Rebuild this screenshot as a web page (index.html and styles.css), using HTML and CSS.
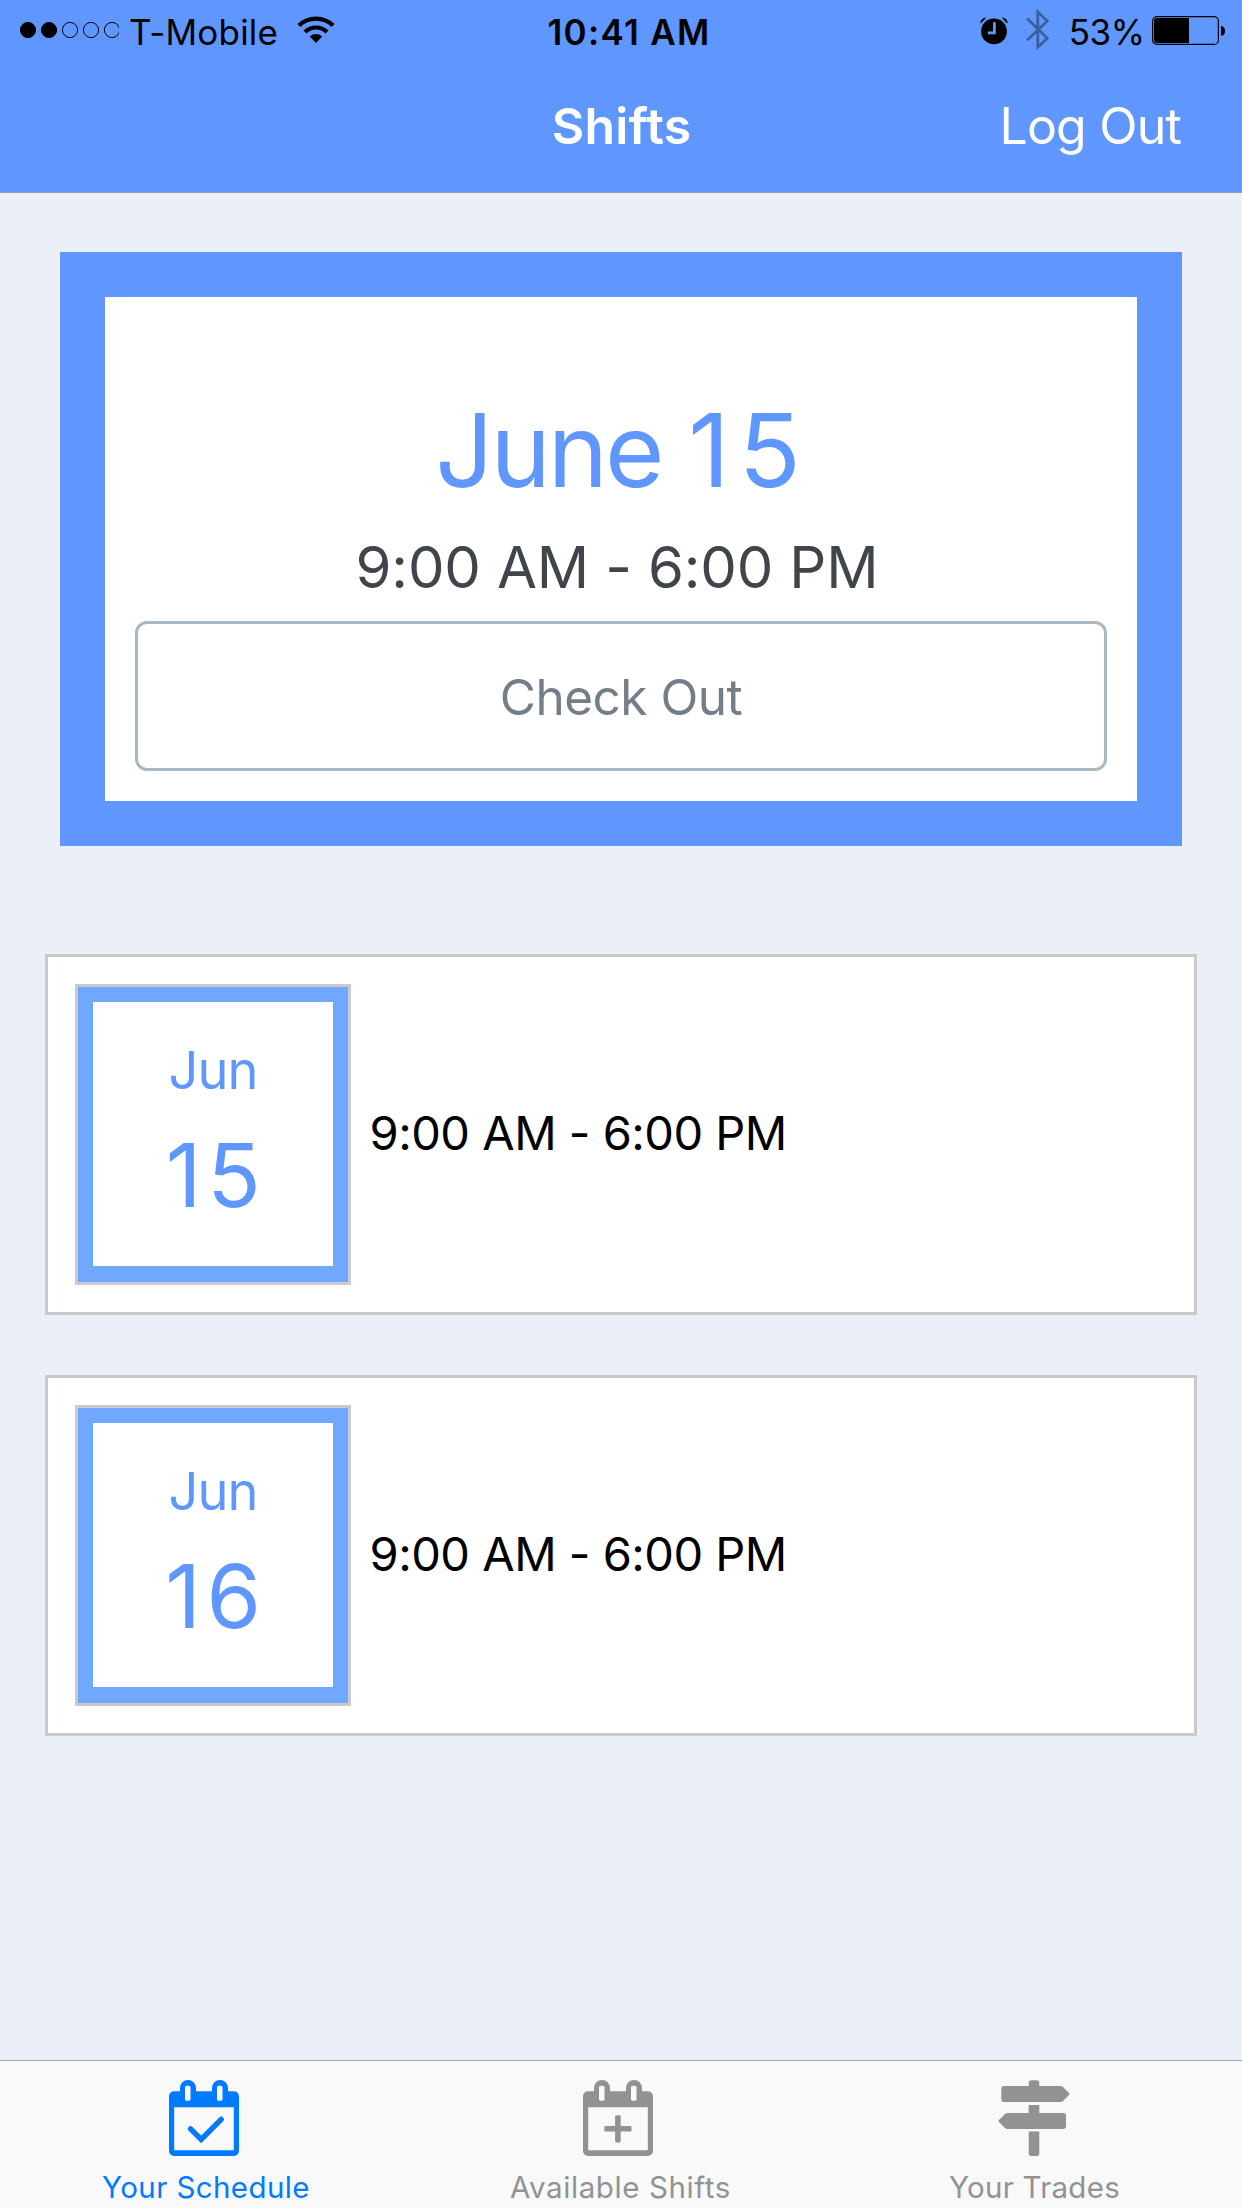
FILE: index.html
```html
<!DOCTYPE html>
<html lang="en">
<head>
<meta charset="utf-8">
<title>Shifts</title>
<link rel="stylesheet" href="styles.css">
</head>
<body>
<div class="app">
  <header class="top">
    <div class="status">
      <div class="status-left">
        <svg class="signal" width="100" height="18" viewBox="0 0 100 18"><g stroke="#000"><circle cx="9" cy="9" r="7.6"/><circle cx="30" cy="9" r="7.6"/><g fill="none"><circle cx="51" cy="9" r="7.6"/><circle cx="72" cy="9" r="7.6"/><circle cx="93" cy="9" r="7.6"/></g></g></svg>
        <span class="carrier">T-Mobile</span>
        <svg class="wifi" width="38" height="28" viewBox="0 0 38 28"><path d="M19 27L12.8 20.6A9 9 0 0 1 25.2 20.6Z"/><g fill="none" stroke="#000" stroke-width="4.2"><path d="M8 15.9A15.9 15.9 0 0 1 30 15.9"/><path d="M1.9 9.6A24.6 24.6 0 0 1 36.1 9.6"/></g></svg>
      </div>
      <span class="clock">10:41 AM</span>
      <div class="status-right">
        <svg class="alarm" width="28" height="28" viewBox="0 0 28 28"><circle cx="14" cy="14.4" r="12.9"/><path d="M0.3 6Q1 0.8 6.4 0.6L1 6.2ZM27.7 6Q27 0.8 21.6 0.6L27 6.2Z"/><path d="M14.4 5.2V15.8H7.8" fill="none" stroke="#5f97ff" stroke-width="2.8"/></svg>
        <svg class="bluetooth" width="24" height="42" viewBox="0 0 24 42"><path d="M1.2 9.6L21.3 29.2 11.8 38.2V3L21.3 12 1.2 31.2" fill="none" stroke="#3b5f9f" stroke-width="2.8"/></svg>
        <span class="percent">53%</span>
        <svg class="battery" width="74" height="30" viewBox="0 0 74 30"><rect x=".6" y=".6" width="65.8" height="27.8" rx="4.5" fill="none" stroke="#000" stroke-width="1.2"/><path d="M5 2H37V27H5Q2 27 2 24V5Q2 2 5 2ZM69 10Q73 10.4 73 14.9T69 19.8Z"/></svg>
      </div>
    </div>
    <nav class="nav">
      <h1 class="title">Shifts</h1>
      <a class="logout">Log Out</a>
    </nav>
  </header>

  <main class="content">
    <section class="current">
      <h2 class="current-date"><span class="word">June</span> <span class="number">15</span></h2>
      <p class="current-time">9:00 AM - 6:00 PM</p>
      <button class="checkout">Check Out</button>
    </section>
    <ul class="shifts">
      <li class="shift">
        <div class="date"><span class="month">Jun</span><span class="day">15</span></div>
        <span class="hours">9:00 AM - 6:00 PM</span>
      </li>
      <li class="shift">
        <div class="date"><span class="month">Jun</span><span class="day">16</span></div>
        <span class="hours">9:00 AM - 6:00 PM</span>
      </li>
    </ul>
  </main>

  <footer class="tabs">
    <a class="tab active">
      <svg width="70" height="76" viewBox="0 0 70 76" fill="currentColor"><path fill-rule="evenodd" d="M5 11.3H11V8A8 8 0 0 1 27 8V11.3H43V8A8 8 0 0 1 59 8V11.3H65A5 5 0 0 1 70 16.3V71A5 5 0 0 1 65 76H5A5 5 0 0 1 0 71V16.3A5 5 0 0 1 5 11.3ZM5.2 27.2V70.2H64.8V27.2ZM17.5 5.8Q16 5.8 16 7.3V19.3Q16 20.8 17.5 20.8H20Q21.5 20.8 21.5 19.3V7.3Q21.5 5.8 20 5.8ZM49.5 5.8Q48 5.8 48 7.3V19.3Q48 20.8 49.5 20.8H52Q53.5 20.8 53.5 19.3V7.3Q53.5 5.8 52 5.8Z"/><path d="M21.6 48.8L32.2 59.4 52.2 39.4" fill="none" stroke="currentColor" stroke-width="5.4" stroke-linecap="round"/></svg>
      <span class="label schedule">Your Schedule</span>
    </a>
    <a class="tab">
      <svg width="70" height="76" viewBox="0 0 70 76" fill="currentColor"><path fill-rule="evenodd" d="M5 11.3H11V8A8 8 0 0 1 27 8V11.3H43V8A8 8 0 0 1 59 8V11.3H65A5 5 0 0 1 70 16.3V71A5 5 0 0 1 65 76H5A5 5 0 0 1 0 71V16.3A5 5 0 0 1 5 11.3ZM5.2 27.2V70.2H64.8V27.2ZM17.5 5.8Q16 5.8 16 7.3V19.3Q16 20.8 17.5 20.8H20Q21.5 20.8 21.5 19.3V7.3Q21.5 5.8 20 5.8ZM49.5 5.8Q48 5.8 48 7.3V19.3Q48 20.8 49.5 20.8H52Q53.5 20.8 53.5 19.3V7.3Q53.5 5.8 52 5.8Z"/><rect x="21.3" y="46" width="27.2" height="5.6" rx="1.4"/><rect x="32.1" y="35.2" width="5.6" height="27.2" rx="1.4"/></svg>
      <span class="label available">Available Shifts</span>
    </a>
    <a class="tab">
      <svg width="72" height="76" viewBox="0 0 72 76" fill="currentColor"><path d="M30.7 6V3Q30.7 .3 33.4 .3H38.6Q41.3 .3 41.3 3V6H62.5Q64 6 65 7L71 13Q72 14 71 15L65 21Q64 22 62.5 22H6Q3.3 22 3.3 19.3V8.7Q3.3 6 6 6ZM30.7 25H41.3V33H65.3Q68 33 68 35.7V46.3Q68 49 65.3 49H9.5Q8 49 7 48L1 42Q0 41 1 40L7 34Q8 33 9.5 33H30.7ZM30.7 51.5H41.3V73.3Q41.3 76 38.6 76H33.4Q30.7 76 30.7 73.3Z"/></svg>
      <span class="label trades">Your Trades</span>
    </a>
  </footer>
</div>
</body>
</html>
```
FILE: styles.css
```css
* { box-sizing: border-box; }

body {
  margin: 0;
  font-family: Inter, "Liberation Sans", sans-serif;
  background: #ebeff8;
  color: #000;
}

h1, h2, p, ul { margin: 0; padding: 0; font-weight: 400; }

svg { display: block; flex: none; }

.app {
  display: flex;
  flex-direction: column;
  width: 1242px;
  height: 2208px;
  overflow: hidden;
}

.top {
  flex: none;
  height: 193px;
  background: #5f97ff;
  border-bottom: 1px solid #9aa0ad;
}

.status, .nav {
  display: grid;
  grid-template-columns: 1fr auto 1fr;
  align-items: center;
}

.status { height: 60px; font-size: 35px; line-height: 56px; padding: 0 16px 0 19px; }
.status-left, .status-right { display: flex; align-items: center; height: 60px; }
.status-right { justify-content: flex-end; }
.carrier { margin-left: 10px; padding-top: 3px; letter-spacing: 0.2px; }
.wifi { margin-left: 19px; }
.clock { padding: 3px 0 0 13px; font-weight: 600; letter-spacing: 1.3px; }
.alarm { margin-top: 1px; }
.bluetooth { margin-left: 18px; }
.percent { margin: 0 7.5px 0 19px; padding-top: 3px; letter-spacing: -0.5px; }
.battery { margin-top: 2px; }

.nav { height: 132px; padding: 0 60px; color: #fff; }
.title { grid-column: 2; padding-left: 1px; font-size: 50px; font-weight: 600; letter-spacing: 0.2px; }
.logout { justify-self: end; margin-right: 1px; font-size: 50px; letter-spacing: -0.8px; }

.content { flex: 1; padding: 59px 45px 0; }

.current {
  display: flex;
  flex-direction: column;
  margin: 0 15px;
  height: 594px;
  padding: 92px 30px 30px;
  border: 45px solid #5f97ff;
  background: #fff;
  text-align: center;
}
.current-date { padding-left: 3px; font-size: 102px; line-height: 122px; color: #5f97ff; }
.current-date .word { margin-right: -2px; letter-spacing: -3px; }
.current-date .number { letter-spacing: 9px; }
.current-time {
  margin: 20px 0 18px;
  padding-right: 8px;
  font-size: 58px;
  line-height: 72px;
  letter-spacing: -0.15px;
  color: #40444b;
}
.checkout {
  height: 150px;
  padding: 2px 0 0;
  border: 3px solid #acb7c4;
  border-radius: 12px;
  background: #fff;
  font: 49.5px/60px Inter, "Liberation Sans", sans-serif;
  letter-spacing: -0.5px;
  color: #747e88;
}

.shifts { display: flex; flex-direction: column; gap: 60px; margin-top: 108px; list-style: none; }
.shift {
  display: flex;
  height: 361px;
  padding: 27px;
  border: 3px solid #cacaca;
  background: #fff;
}
.date {
  display: flex;
  flex-direction: column;
  align-items: center;
  gap: 20px;
  width: 276px;
  padding-top: 51px;
  border: 3px solid #cacaca;
  box-shadow: inset 0 0 0 15px #70a8ff, inset 0 -16px #70a8ff;
  color: #5f97ff;
}
.month { font-size: 52.4px; line-height: 64px; letter-spacing: -0.9px; }
.day { padding-left: 6px; font-size: 88px; line-height: 106px; letter-spacing: 5.5px; }
.hours {
  align-self: center;
  margin-left: 18.5px;
  padding-bottom: 3px;
  font-size: 47px;
  line-height: 60px;
  letter-spacing: -0.5px;
}

.tabs {
  flex: none;
  display: grid;
  grid-template-columns: 408px 420px 412px;
  height: 148px;
  border-top: 1px solid #a3a5b1;
  background: #f9f9f9;
}
.tab { display: flex; flex-direction: column; align-items: center; padding-top: 19px; color: #929292; }
.active { color: #007aff; }
.label { margin-top: 13px; font-size: 29.5px; line-height: 36px; }
.schedule { padding-left: 4px; letter-spacing: 0.4px; }
.available { padding-left: 5px; letter-spacing: 0.6px; }
.trades { padding-left: 1px; letter-spacing: 0.25px; }
```
